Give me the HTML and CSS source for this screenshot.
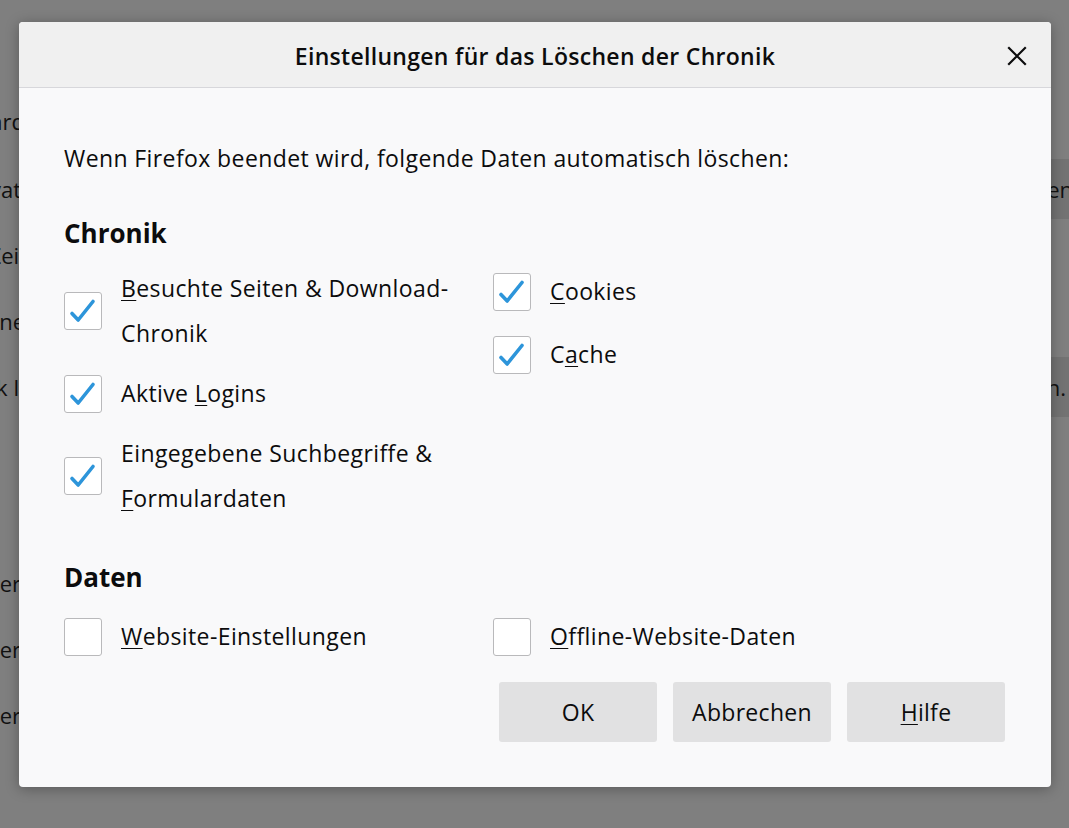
FILE: index.html
```html
<!DOCTYPE html>
<html lang="de">
<head>
    <meta charset="UTF-8">
    <meta name="viewport" content="width=device-width, initial-scale=1.0">
    <title>Einstellungen für das Löschen der Chronik</title>
    <link rel="stylesheet" href="styles.css">
</head>
<body>
    <div class="backdrop">
        <div class="bg-row first"><span class="bg-label">Standard</span></div>
        <div class="bg-row"><span class="bg-label narrow">Privat</span><span class="bg-field"><span class="bg-end">Ausnahmen</span></span></div>
        <div class="bg-row"><span class="bg-label wide">Zeit</span></div>
        <div class="bg-row"><span class="bg-label">Keine</span></div>
        <div class="bg-row"><span class="bg-label">Blick Il</span><span class="bg-field"><span class="bg-end near">Einstellungen.</span></span></div>
        <div class="bg-row spaced"><span class="bg-label narrow">Speicher</span></div>
        <div class="bg-row"><span class="bg-label narrow">Ordner</span></div>
        <div class="bg-row"><span class="bg-label narrow">Anbieter</span></div>
    </div>

    <div class="dialog">
        <div class="dialog-head">
            <h1>Einstellungen für das Löschen der Chronik</h1>
            <button class="close" aria-label="Schließen">
                <svg width="20" height="20" viewBox="0 0 20 20">
                    <path d="M2 2 L18 18 M18 2 L2 18" stroke="#0c0c0d" stroke-width="2.2" stroke-linecap="square" fill="none"/>
                </svg>
            </button>
        </div>

        <div class="dialog-body">
            <p class="intro">Wenn Firefox beendet wird, folgende Daten automatisch löschen:</p>

            <h2>Chronik</h2>
            <div class="options">
                <div class="col">
                    <label class="opt">
                        <span class="box checked"></span>
                        <span class="text"><u>B</u>esuchte Seiten &amp; Download-Chronik</span>
                    </label>
                    <label class="opt">
                        <span class="box checked"></span>
                        <span class="text">Aktive <u>L</u>ogins</span>
                    </label>
                    <label class="opt">
                        <span class="box checked"></span>
                        <span class="text">Eingegebene Suchbegriffe &amp; <u>F</u>ormulardaten</span>
                    </label>
                </div>
                <div class="col right">
                    <label class="opt">
                        <span class="box checked"></span>
                        <span class="text"><u>C</u>ookies</span>
                    </label>
                    <label class="opt">
                        <span class="box checked"></span>
                        <span class="text">C<u>a</u>che</span>
                    </label>
                </div>
            </div>

            <h2 class="second">Daten</h2>
            <div class="options">
                <div class="col">
                    <label class="opt">
                        <span class="box"></span>
                        <span class="text"><u>W</u>ebsite-Einstellungen</span>
                    </label>
                </div>
                <div class="col">
                    <label class="opt">
                        <span class="box"></span>
                        <span class="text"><u>O</u>ffline-Website-Daten</span>
                    </label>
                </div>
            </div>

            <div class="buttons">
                <button class="btn">OK</button>
                <button class="btn">Abbrechen</button>
                <button class="btn"><u>H</u>ilfe</button>
            </div>
        </div>
    </div>
</body>
</html>
```

FILE: styles.css
```css
html, body {
    margin: 0;
    height: 100%;
}

body {
    position: relative;
    overflow: hidden;
    background-color: #7f7f7f;
    font-family: "Open Sans", "Noto Sans", sans-serif;
    color: #0c0c0d;
}

/* page behind the overlay */
.backdrop {
    display: flex;
    flex-direction: column;
    padding-top: 89px;
    font-size: 22px;
    color: #111;
}

.bg-row {
    display: flex;
    align-items: center;
    height: 60px;
    margin-top: 6px;
    white-space: nowrap;
}

.bg-row.first {
    height: 64px;
    margin-top: 0;
}

.bg-row.spaced {
    margin-top: 136px;
}

.bg-label {
    display: flex;
    justify-content: flex-end;
    width: 25px;
}

.bg-label.narrow {
    width: 21px;
}

.bg-label.wide {
    width: 27px;
}

.bg-field {
    display: flex;
    align-items: center;
    justify-content: flex-end;
    margin-left: auto;
    width: 500px;
    height: 60px;
    background-color: #737373;
}

.bg-end {
    margin-right: -4px;
}

.bg-end.near {
    margin-right: 3px;
}

/* dialog */
.dialog {
    position: absolute;
    left: 19px;
    top: 22px;
    width: 1032px;
    height: 765px;
    display: flex;
    flex-direction: column;
    background-color: #f9f9fa;
    border-radius: 4px;
    box-shadow: 0 2px 14px rgba(0, 0, 0, 0.3);
    overflow: hidden;
}

.dialog-head {
    position: relative;
    flex: none;
    display: flex;
    align-items: center;
    justify-content: center;
    height: 65px;
    background-color: #f0f0f0;
    border-bottom: 1px solid #d7d7db;
}

.dialog-head h1 {
    margin: 2px 0 0;
    font-size: 23px;
    font-weight: 600;
    letter-spacing: 0.3px;
}

.close {
    position: absolute;
    right: 24px;
    top: 24px;
    padding: 0;
    border: 0;
    background: none;
    width: 20px;
    height: 20px;
}

.close svg {
    display: block;
}

.dialog-body {
    display: flex;
    flex-direction: column;
    padding: 55px 46px 45px 45px;
    font-size: 23px;
    letter-spacing: 0.4px;
}

.intro {
    margin: 0;
    line-height: 30px;
}

h2 {
    margin: 42px 0 15px;
    font-size: 26px;
    font-weight: 700;
    line-height: 36px;
    letter-spacing: 0;
}

h2.second {
    margin-top: 38px;
    margin-bottom: 19px;
}

.options {
    display: grid;
    grid-template-columns: 429px 1fr;
}

.col {
    display: flex;
    flex-direction: column;
    gap: 15px;
}

.col.right {
    padding-top: 3px;
    gap: 18px;
}

.opt {
    display: flex;
    align-items: center;
    gap: 19px;
    line-height: 45px;
}

.opt .text {
    max-width: 362px;
}

.box {
    flex: none;
    width: 36px;
    height: 36px;
    border: 1px solid #b9b9bb;
    border-radius: 3px;
    background-color: #fff;
    background-repeat: no-repeat;
    background-position: center;
}

.box.checked {
    background-image: url("data:image/svg+xml,%3Csvg xmlns='http://www.w3.org/2000/svg' width='36' height='36' viewBox='0 0 36 36'%3E%3Cpath d='M7 20.5 L13.2 27 L28 8.5' fill='none' stroke='%232d95da' stroke-width='3.6' stroke-linecap='round' stroke-linejoin='round'/%3E%3C/svg%3E");
}

u {
    text-decoration-thickness: 1px;
    text-underline-offset: 3px;
}

.buttons {
    display: flex;
    justify-content: flex-end;
    gap: 16px;
    margin-top: 23px;
}

.btn {
    width: 158px;
    height: 60px;
    padding: 0;
    border: 0;
    border-radius: 3px;
    background-color: #e1e1e2;
    font-family: inherit;
    font-size: 23px;
    letter-spacing: 0.3px;
    color: #0c0c0d;
}
```
